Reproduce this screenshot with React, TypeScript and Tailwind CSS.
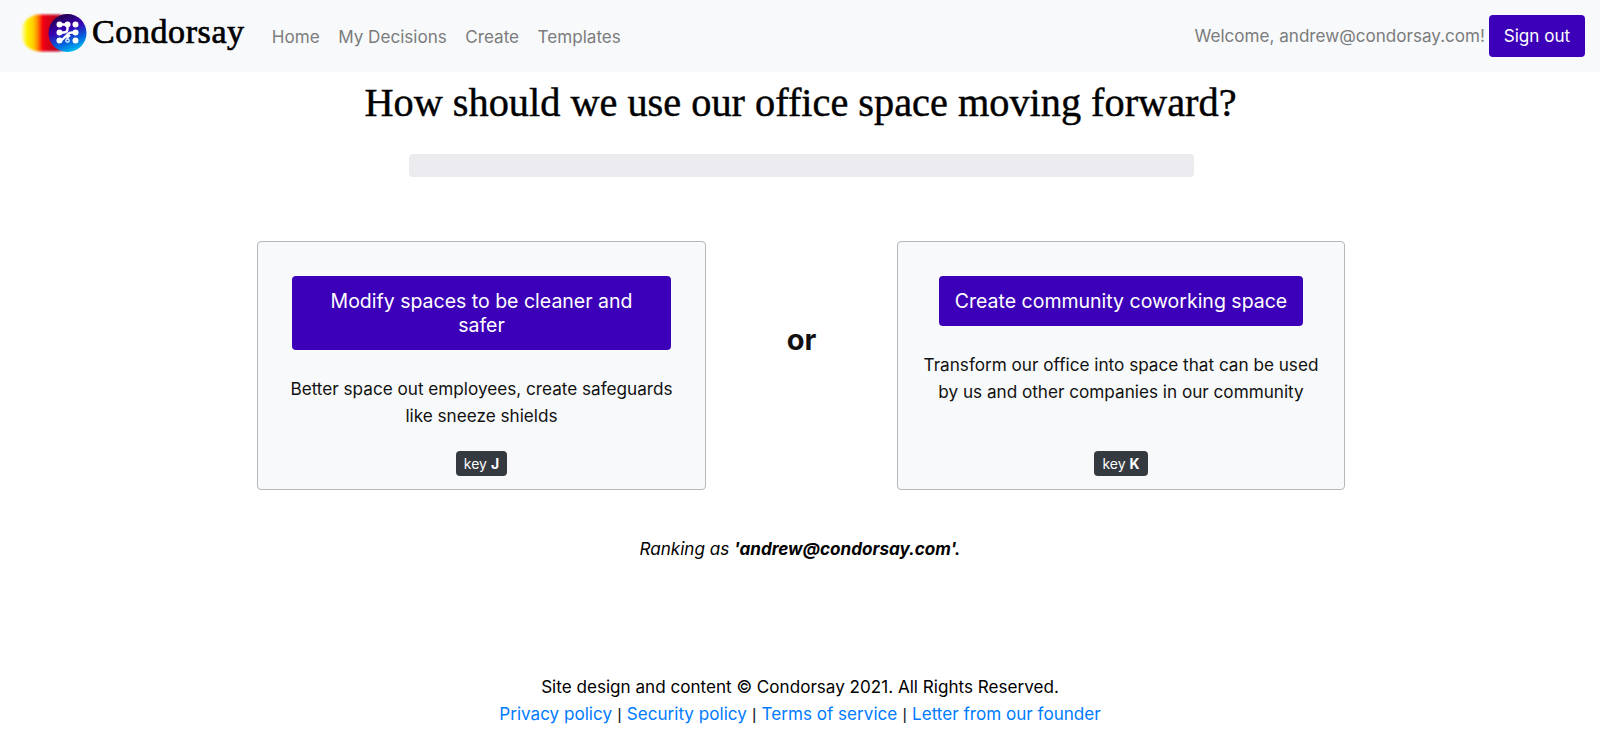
const sans = "font-['Inter','Liberation_Sans',sans-serif]";

function Logo() {
  return (
    <svg width="70" height="40" viewBox="0 0 70 40" className="shrink-0 mb-[7px] -ml-[2px]">
      <defs>
        <linearGradient id="lg" x1="0" x2="1" y1="0" y2="0">
          <stop offset="0" stopColor="#fffde0" />
          <stop offset="0.1" stopColor="#fff200" />
          <stop offset="0.22" stopColor="#ffd000" />
          <stop offset="0.31" stopColor="#ff8000" />
          <stop offset="0.38" stopColor="#f80010" />
          <stop offset="0.5" stopColor="#d80018" />
          <stop offset="1" stopColor="#700040" />
        </linearGradient>
        <linearGradient id="disc" x1="0.25" x2="0.65" y1="0" y2="1">
          <stop offset="0" stopColor="#1e0040" />
          <stop offset="0.4" stopColor="#3a00b0" />
          <stop offset="0.75" stopColor="#0068e0" />
          <stop offset="1" stopColor="#00c4f0" />
        </linearGradient>
        <filter id="soft" x="-10%" y="-10%" width="120%" height="120%">
          <feGaussianBlur stdDeviation="0.9" />
        </filter>
      </defs>
      <rect x="3" y="1.5" width="55" height="37" rx="18.5" fill="url(#lg)" filter="url(#soft)" />
      <circle cx="49.5" cy="20" r="19" fill="url(#disc)" />
      <g fill="#fff">
        <circle cx="41.5" cy="11.5" r="3" />
        <circle cx="49.5" cy="11.5" r="3" />
        <circle cx="57.5" cy="11.5" r="3" />
        <circle cx="41.5" cy="19.5" r="3" />
        <circle cx="57.5" cy="19.5" r="3" />
        <circle cx="41.5" cy="27.5" r="3" />
        <circle cx="57.5" cy="27.5" r="3" />
      </g>
      <circle cx="49.5" cy="27.5" r="1.7" fill="none" stroke="#fff" strokeWidth="1.2" />
      <path d="M41.5 11.5H47Q49.5 11.5 49.5 14V16Q49.5 19.5 46 19.5H41.5M57.5 19.5H54Q51.5 19.5 50 21L45 26Q43.5 27.5 41.5 27.5M49.5 25.5V24L52 22" stroke="#fff" strokeWidth="2.3" fill="none" />
    </svg>
  );
}

function Card({ title, body, k, width }: { title: string; body: string; k: string; width: string }) {
  return (
    <div className={`${width} h-[249px] border border-[#b5b7b9] rounded-[4px] bg-[#f8f9fa] pt-[34px] flex flex-col items-center`}>
      <button className="max-w-[379px] w-fit rounded-[4px] bg-[#3c00b8] text-white text-[19.5px] leading-[24px] text-center px-4 py-[13px]">
        {title}
      </button>
      <p className="mt-[25px] w-[405px] text-[17.15px] leading-[27px] text-[#111] text-center">{body}</p>
      <div className="mt-auto mb-[13px] h-[25px] px-2 flex items-center rounded-[4px] bg-[#343a40] text-white text-[14px]">
        key&nbsp;<b className="font-bold">{k}</b>
      </div>
    </div>
  );
}

function Sep() {
  return <span className="px-[0.4px] font-['Liberation_Sans',sans-serif]"> | </span>;
}

export default function App() {
  return (
    <div className={`${sans} min-h-[744px] bg-white text-black`}>
      <nav className="h-[72px] bg-[#f8f9fa] flex items-center pl-[20px] pr-[15px]">
        <Logo />
        <span className="ml-[4px] mb-[9px] font-['Liberation_Serif',serif] text-[34px] tracking-[0.6px] [-webkit-text-stroke:0.7px_black]">Condorsay</span>
        <div className="ml-[27px] mt-[1px] flex gap-[18.5px] text-[17.1px] text-[#7b7c7d]">
          <span>Home</span>
          <span>My Decisions</span>
          <span>Create</span>
          <span>Templates</span>
        </div>
        <span className="ml-auto mb-[1px] text-[17.1px] text-[#7b7c7d]">Welcome, andrew@condorsay.com!</span>
        <button className="ml-[4px] h-[42px] w-[96px] rounded-[4px] bg-[#3c00b8] text-white text-[17.1px]">Sign out</button>
      </nav>

      <main className="flex flex-col items-center">
        <h1 className="mt-[8px] ml-[1px] font-['Liberation_Serif',serif] text-[40.3px] leading-[46px] [-webkit-text-stroke:0.45px_black]">
          How should we use our office space moving forward?
        </h1>
        <div className="mt-[28px] ml-[2px] w-[785px] h-[23px] rounded-[4px] bg-[#ebebef]" />
        <div className="mt-[64px] flex items-start w-[1088px] justify-between ml-[2px]">
          <Card width="w-[449px]" title="Modify spaces to be cleaner and safer" body="Better space out employees, create safeguards like sneeze shields" k="J" />
          <span className="mt-[77px] text-[29px] font-bold text-[#111]">or</span>
          <Card width="w-[448px]" title="Create community coworking space" body="Transform our office into space that can be used by us and other companies in our community" k="K" />
        </div>
        <p className="mt-[45px] text-[17.1px] leading-[27px] italic">
          Ranking as <b className="font-bold">'andrew@condorsay.com'.</b>
        </p>
        <footer className="mt-[111px] text-center text-[17.1px] leading-[27px]">
          <div>Site design and content © Condorsay 2021. All Rights Reserved.</div>
          <div className="text-[#212529]">
            <a className="text-[#007bff]">Privacy policy</a><Sep /><a className="text-[#007bff]">Security policy</a><Sep /><a className="text-[#007bff]">Terms of service</a><Sep /><a className="text-[#007bff]">Letter from our founder</a>
          </div>
        </footer>
      </main>
    </div>
  );
}
